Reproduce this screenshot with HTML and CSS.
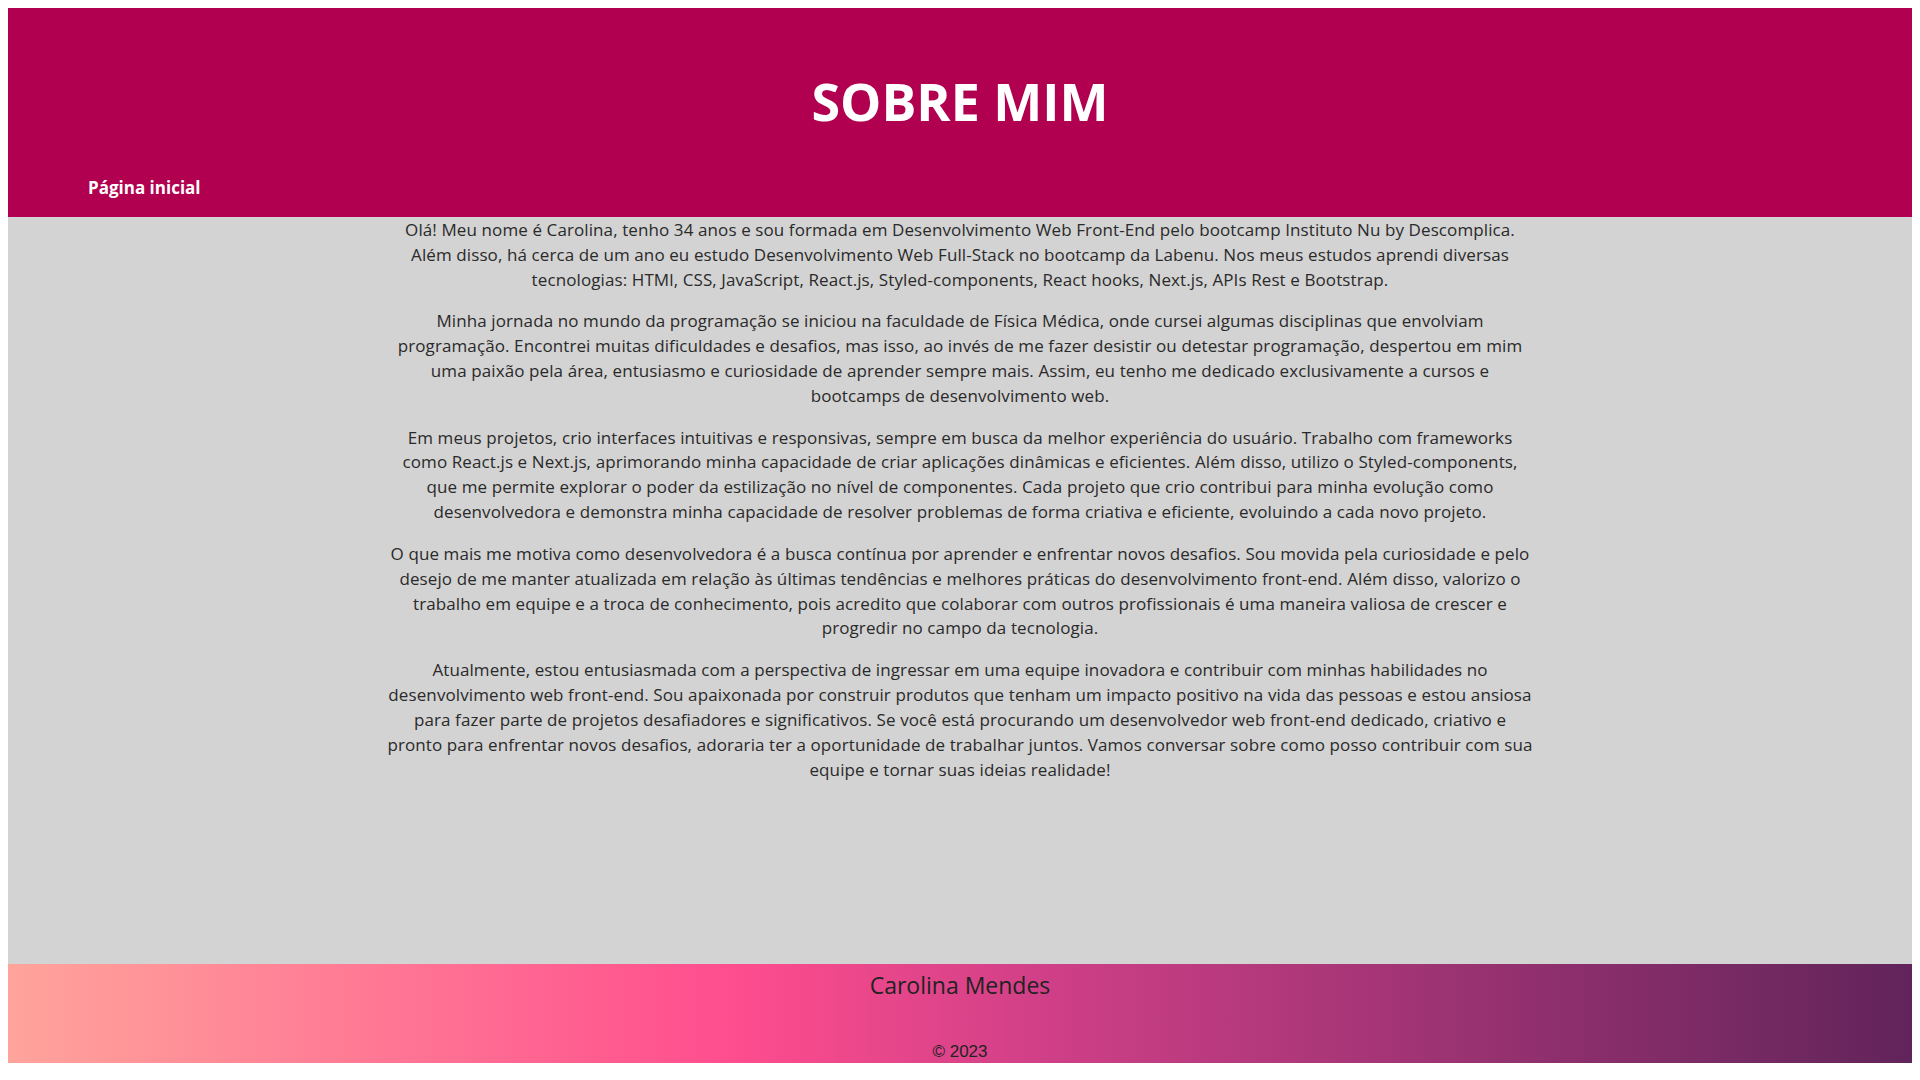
FILE: index.html
```html
<!DOCTYPE html>
<html lang="pt-BR">
<head>
<meta charset="utf-8">
<title>Sobre mim</title>
<link rel="stylesheet" href="styles.css">
</head>
<body>
<header class="header">
  <h1 class="title">SOBRE MIM</h1>
  <nav class="nav"><a class="nav-link" href="#">Página inicial</a></nav>
</header>
<main class="main">
  <div class="about">
    <p>Olá! Meu nome é Carolina, tenho 34 anos e sou formada em Desenvolvimento Web Front-End pelo bootcamp Instituto Nu by Descomplica.<br>Além disso, há cerca de um ano eu estudo Desenvolvimento Web Full-Stack no bootcamp da Labenu. Nos meus estudos aprendi diversas<br>tecnologias: HTMl, CSS, JavaScript, React.js, Styled-components, React hooks, Next.js, APIs Rest e Bootstrap.</p>
    <p>Minha jornada no mundo da programação se iniciou na faculdade de Física Médica, onde cursei algumas disciplinas que envolviam<br>programação. Encontrei muitas dificuldades e desafios, mas isso, ao invés de me fazer desistir ou detestar programação, despertou em mim<br>uma paixão pela área, entusiasmo e curiosidade de aprender sempre mais. Assim, eu tenho me dedicado exclusivamente a cursos e<br>bootcamps de desenvolvimento web.</p>
    <p>Em meus projetos, crio interfaces intuitivas e responsivas, sempre em busca da melhor experiência do usuário. Trabalho com frameworks<br>como React.js e Next.js, aprimorando minha capacidade de criar aplicações dinâmicas e eficientes. Além disso, utilizo o Styled-components,<br>que me permite explorar o poder da estilização no nível de componentes. Cada projeto que crio contribui para minha evolução como<br>desenvolvedora e demonstra minha capacidade de resolver problemas de forma criativa e eficiente, evoluindo a cada novo projeto.</p>
    <p>O que mais me motiva como desenvolvedora é a busca contínua por aprender e enfrentar novos desafios. Sou movida pela curiosidade e pelo<br>desejo de me manter atualizada em relação às últimas tendências e melhores práticas do desenvolvimento front-end. Além disso, valorizo o<br>trabalho em equipe e a troca de conhecimento, pois acredito que colaborar com outros profissionais é uma maneira valiosa de crescer e<br>progredir no campo da tecnologia.</p>
    <p>Atualmente, estou entusiasmada com a perspectiva de ingressar em uma equipe inovadora e contribuir com minhas habilidades no<br>desenvolvimento web front-end. Sou apaixonada por construir produtos que tenham um impacto positivo na vida das pessoas e estou ansiosa<br>para fazer parte de projetos desafiadores e significativos. Se você está procurando um desenvolvedor web front-end dedicado, criativo e<br>pronto para enfrentar novos desafios, adoraria ter a oportunidade de trabalhar juntos. Vamos conversar sobre como posso contribuir com sua<br>equipe e tornar suas ideias realidade!</p>
  </div>
</main>
<footer class="footer">
  <p class="footer-name">Carolina Mendes</p>
  <p class="footer-copy">© 2023</p>
</footer>
</body>
</html>
```

FILE: styles.css
```css
body {
  margin: 8px;
  font-family: "Open Sans", "Noto Sans", sans-serif;
  color: #2a2a2a;
}

.header {
  background: #b0004f;
  height: 209px;
  box-sizing: border-box;
  padding: 62px 0 19px;
}

.title {
  margin: 0;
  text-align: center;
  color: #ffffff;
  font-size: 52px;
  line-height: 62px;
  font-weight: 700;
}

.nav {
  margin-top: 46px;
  padding-left: 80px;
  line-height: 20px;
}

.nav-link {
  color: #ffffff;
  font-size: 17px;
  font-weight: 700;
  text-decoration: none;
}

.main {
  background: #d3d3d3;
  height: 747px;
  box-sizing: border-box;
  padding-top: 1px;
}

.about {
  text-align: center;
  font-size: 17px;
  letter-spacing: 0.1px;
  line-height: 24.9px;
  white-space: nowrap;
}

.about p {
  margin: 16.6px 0;
}

.about p:first-child {
  margin-top: 0;
}

.footer {
  height: 99px;
  box-sizing: border-box;
  padding-top: 6px;
  background: linear-gradient(to right, #ffa49b 0%, #ff4d8e 38%, #ce3f87 55%, #61245a 100%);
  text-align: center;
  color: #222222;
}

.footer-name {
  margin: 0;
  font-size: 23px;
  line-height: 30px;
}

.footer-copy {
  margin: 42px 0 0;
  font-family: "Liberation Sans", Arial, sans-serif;
  font-size: 17px;
  line-height: 20px;
}
```
